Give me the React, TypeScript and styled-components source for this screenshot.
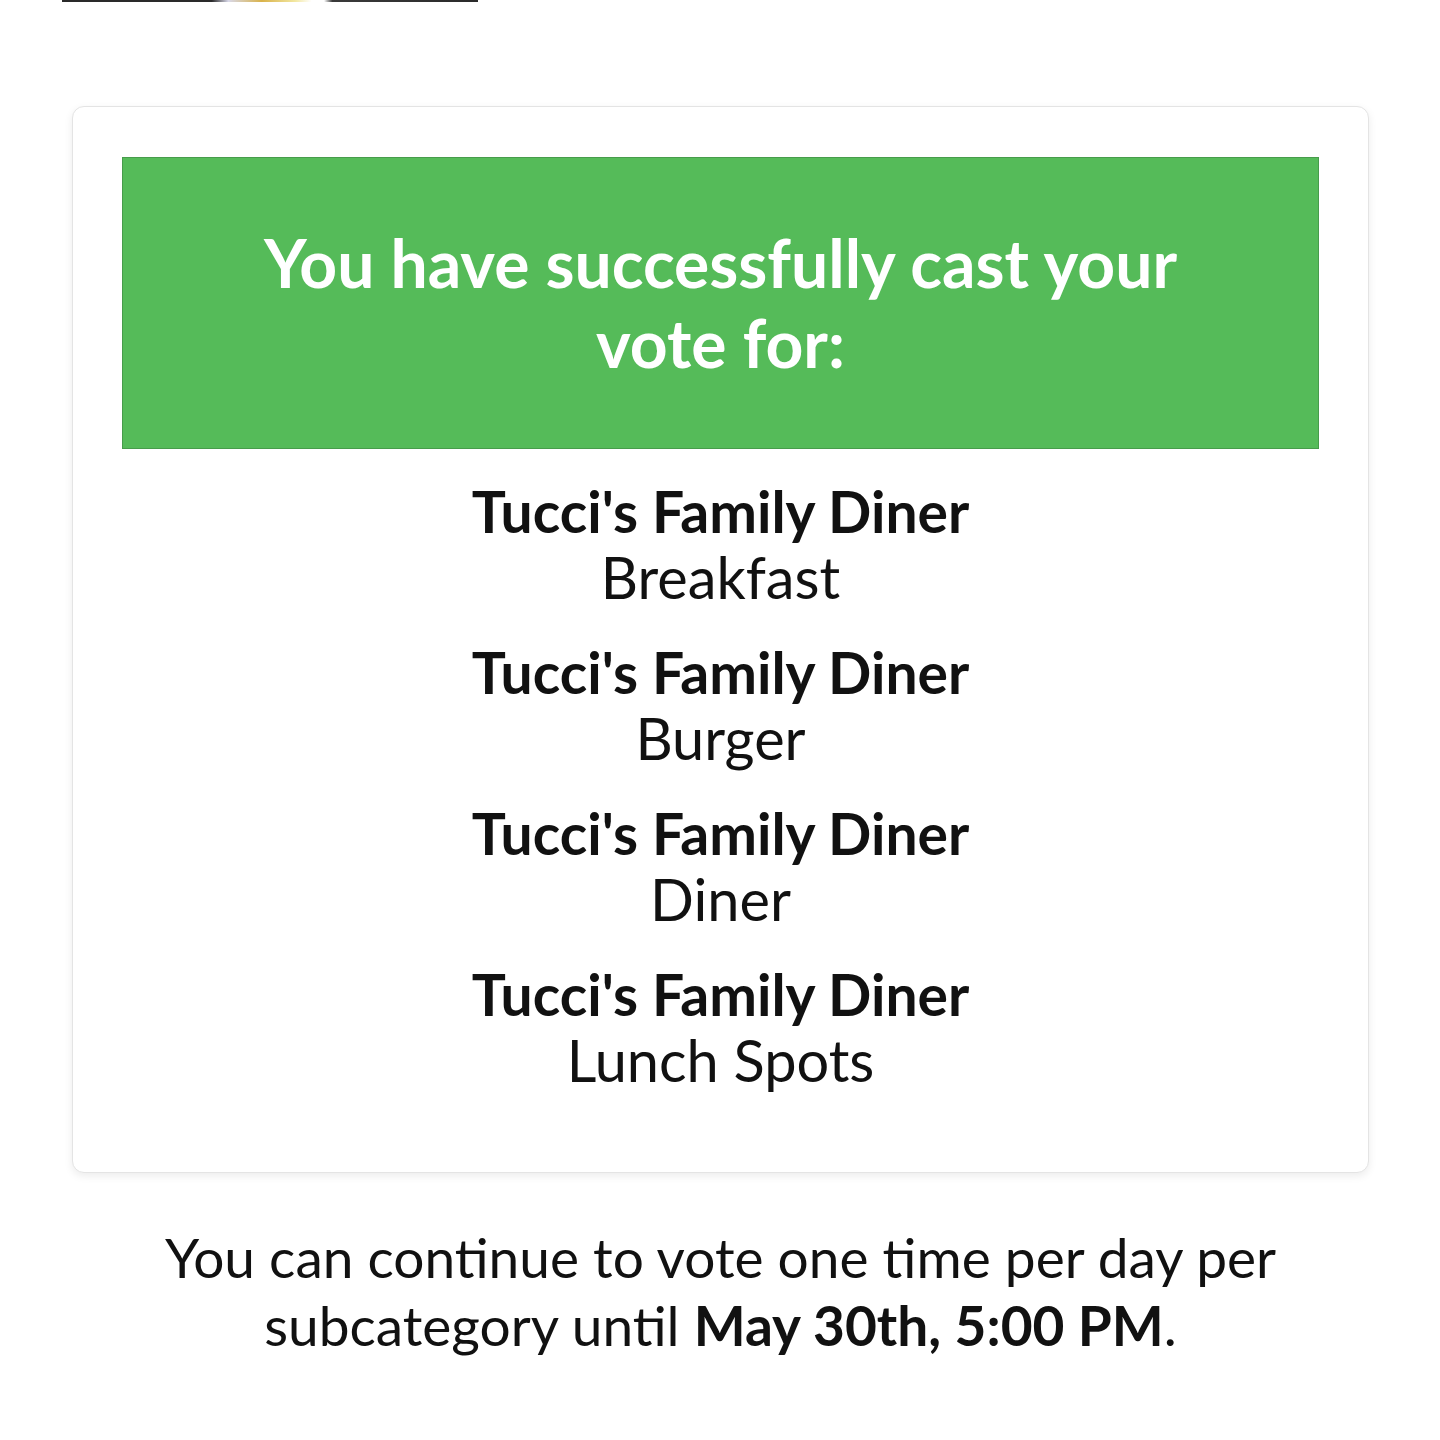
import styled, { createGlobalStyle } from 'styled-components';

const GlobalStyle = createGlobalStyle`
  html, body {
    margin: 0;
    padding: 0;
    background: #ffffff;
  }
  body {
    font-family: Lato, "Open Sans", "Liberation Sans", sans-serif;
    color: #111111;
  }
`;

const Page = styled.main`
  width: 1440px;
  min-height: 1440px;
  box-sizing: border-box;
  padding: 0 71px 0 72px;
  display: flex;
  flex-direction: column;
`;

const PhotoEdge = styled.div`
  margin-left: -10px;
  width: 416px;
  height: 2px;
  background: linear-gradient(
    to right,
    #2a2a2a 0%,
    #2a2a2a 36%,
    #d8d8e8 40%,
    #d9b24a 48%,
    #f2e7a0 56%,
    #ffffff 60%,
    #ffffff 63%,
    #3a3a3a 65%,
    #2a2a2a 100%
  );
`;

const Card = styled.section`
  margin-top: 104px;
  border: 1px solid #e4e4e4;
  border-radius: 12px;
  background: #ffffff;
  box-shadow: 0 3px 8px rgba(0, 0, 0, 0.08);
  padding: 50px 49px 80px;
  display: flex;
  flex-direction: column;
  align-items: stretch;
`;

const Banner = styled.div`
  background: #55bb59;
  border: 1px solid #479c4b;
  height: 292px;
  box-sizing: border-box;
  display: flex;
  align-items: center;
  justify-content: center;
  padding: 0 100px;
`;

const BannerTitle = styled.h1`
  margin: 0;
  color: #ffffff;
  font-weight: 700;
  font-size: 66px;
  line-height: 80px;
  text-align: center;
`;

const VoteList = styled.ul`
  list-style: none;
  margin: 30px 0 0;
  padding: 0;
  display: flex;
  flex-direction: column;
  gap: 31px;
  text-align: center;
`;

const VoteItem = styled.li`
  display: flex;
  flex-direction: column;
`;

const Restaurant = styled.span`
  font-weight: 700;
  font-size: 57px;
  line-height: 65px;
  color: #111111;
`;

const Category = styled.span`
  font-weight: 400;
  font-size: 57.7px;
  line-height: 65px;
  color: #111111;
`;

const Note = styled.p`
  margin: 50px 0 0;
  text-align: center;
  font-size: 55px;
  line-height: 68px;
  color: #111111;
  padding: 0 30px;

  strong {
    font-weight: 700;
  }
`;

const votes = [
  { name: "Tucci's Family Diner", category: 'Breakfast' },
  { name: "Tucci's Family Diner", category: 'Burger' },
  { name: "Tucci's Family Diner", category: 'Diner' },
  { name: "Tucci's Family Diner", category: 'Lunch Spots' },
];

export default function App() {
  return (
    <>
      <GlobalStyle />
      <Page>
        <PhotoEdge />
        <Card>
          <Banner>
            <BannerTitle>You have successfully cast your vote for:</BannerTitle>
          </Banner>
          <VoteList>
            {votes.map((v) => (
              <VoteItem key={v.category}>
                <Restaurant>{v.name}</Restaurant>
                <Category>{v.category}</Category>
              </VoteItem>
            ))}
          </VoteList>
        </Card>
        <Note>
          You can continue to vote one time per day per subcategory until{' '}
          <strong>May 30th, 5:00 PM</strong>.
        </Note>
      </Page>
    </>
  );
}
